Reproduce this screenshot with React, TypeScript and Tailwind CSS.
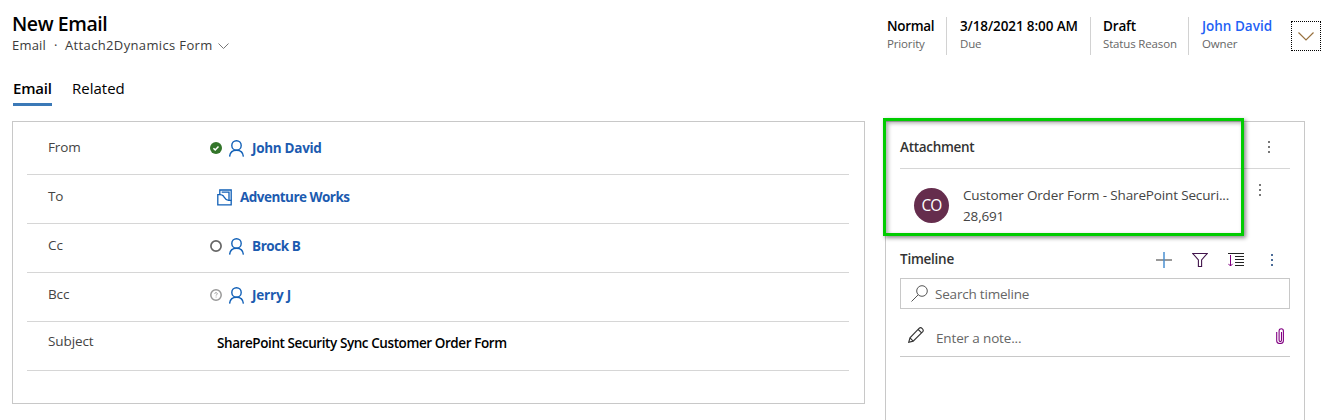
import React from "react";

function Person() {
  return (
    <svg className="h-[17px] w-4 shrink-0" viewBox="0 0 16 17" fill="none" stroke="#1160b7" strokeWidth="1.4">
      <circle cx="7.500" cy="5.400" r="4.700" />
      <path d="M.6 16.600c.3-3.900 3-6.400 6.900-6.400s6.600 2.500 6.900 6.400" />
    </svg>
  );
}

function Account() {
  return (
    <svg className="h-[17px] w-4 shrink-0" viewBox="0 0 16 17" fill="none" stroke="#1160b7" strokeWidth="1.300">
      <path d="M.8 5.700v10.200h13.400V11.400h-2.700C8.500 11 7.600 8.800 6.400 7 5.500 5.800 4.300 5.700 2.800 5.700z" />
      <path d="M2.800 5.700V1h11.400v10.400M4.700 3.200h7.300v8" />
    </svg>
  );
}

function Presence({ kind }: { kind: "ok" | "none" | "unknown" }) {
  if (kind === "ok")
    return (
      <svg className="size-3 shrink-0" viewBox="0 0 12 12">
        <circle cx="6" cy="6" r="6" fill="#33752a" />
        <path d="M3.400 6.200l1.800 1.700 3.300-3.500" fill="none" stroke="#fff" strokeWidth="1.500" />
      </svg>
    );
  if (kind === "none")
    return (
      <svg className="size-3 shrink-0" viewBox="0 0 12 12">
        <circle cx="6" cy="6" r="5.100" fill="none" stroke="#666" strokeWidth="1.700" />
      </svg>
    );
  return (
    <svg className="size-3 shrink-0" viewBox="0 0 12 12" fill="none" stroke="#999">
      <circle cx="6" cy="6" r="5.200" strokeWidth="1.500" />
      <path d="M4.700 4.700c.1-1.500 2.700-1.400 2.600.1 0 .8-1.200.8-1.200 1.800M6.100 7.600v.9" strokeWidth=".9" />
    </svg>
  );
}

function Dots({ color }: { color: string }) {
  return (
    <svg className="h-[14px] w-[2px] shrink-0" viewBox="0 0 2 14" fill={color}>
      <path d="M0 1h2v2H0zM0 6h2v2H0zM0 11h2v2H0z" />
    </svg>
  );
}

function Field({ label, children }: { label: string; children: React.ReactNode }) {
  return (
    <div className="flex h-[49px] items-center border-b border-[#d6d6d6] pb-[4px] pl-[21px]">
      <div className="w-[162px] text-[13.500px] tracking-[-0.100px] text-[#444] first-of-type:pb-px">{label}</div>
      <div className="flex items-center text-[13.500px] font-bold tracking-[-0.420px] text-[#1c5bb0]">{children}</div>
    </div>
  );
}

function Stat({
  value,
  label,
  className,
  valueClass,
}: {
  value: string;
  label: string;
  className: string;
  valueClass: string;
}) {
  return (
    <div className={className}>
      <div className={`h-[18px] text-[13.500px] leading-[18px] font-semibold ${valueClass}`}>{value}</div>
      <div className="h-[19px] text-[11.500px] leading-[18px] tracking-[-0.150px] text-[#666]">{label}</div>
    </div>
  );
}

export default function App() {
  return (
    <div className="flex h-[420px] w-[1321px] flex-col overflow-hidden bg-white font-['Open_Sans',sans-serif] whitespace-nowrap text-black">
      <header className="flex h-[73px] justify-between">
        <div className="pt-[12px] pl-[12px]">
          <h1 className="h-[24px] text-[19.500px] leading-[24px] font-semibold tracking-[-0.420px]">New Email</h1>
          <div className="flex h-[19px] items-center text-[13px] font-medium text-[#3b3b3b]">
            <span className="w-[42px] tracking-[0.200px]">Email</span>
            <span className="w-[11px]">·</span>
            <span className="w-[153px] tracking-[0.360px]">Attach2Dynamics Form</span>
            <svg className="h-[6px] w-[11px]" viewBox="0 0 11 6" fill="none" stroke="#777">
              <path d="M.5.5l5 5 5-5" />
            </svg>
          </div>
        </div>
        <div className="flex pt-[17px]">
          <Stat className="h-[38px] w-[60px] border-r border-[#d2d2d2]" valueClass="tracking-[-0.300px]" value="Normal" label="Priority" />
          <Stat className="h-[38px] w-[144px] border-r border-[#d2d2d2] pl-[13px]" valueClass="tracking-[-0.120px]" value="3/18/2021 8:00 AM" label="Due" />
          <Stat className="h-[38px] w-[98px] border-r border-[#d2d2d2] pl-[12px]" valueClass="tracking-[-0.150px]" value="Draft" label="Status Reason" />
          <Stat className="h-[38px] w-[102px] pl-[13px]" valueClass="text-[#1f62f5]" value="John David" label="Owner" />
          <div className="mt-[4px] flex size-[30px] items-center justify-center border border-dotted border-black">
            <svg className="h-[9px] w-4" viewBox="0 0 16 9" fill="none" stroke="#98713f" strokeWidth="1.200">
              <path d="M.5.5L8 8l7.500-7.500" />
            </svg>
          </div>
        </div>
      </header>

      <nav className="flex h-[48px] gap-[20px] pl-[13px] text-[15px]">
        <div className="h-[33px] w-[39px] border-b-[3px] border-[#3b79b7] leading-[31px] font-semibold tracking-[-0.200px]">Email</div>
        <div className="leading-[31px]">Related</div>
      </nav>

      <main className="flex h-[299px] items-start gap-[20px] pl-[12px]">
        <section className="h-[283px] w-[853px] border border-[#c8c8c8] pt-[4px] pr-[15px] pl-[14px]">
          <Field label="From">
            <Presence kind="ok" />
            <span className="w-[7px]" />
            <Person />
            <span className="pl-[7px] tracking-[-0.300px]">John David</span>
          </Field>
          <Field label="To">
            <span className="w-[7px]" />
            <Account />
            <span className="pl-[7px] tracking-[-0.530px]">Adventure Works</span>
          </Field>
          <Field label="Cc">
            <Presence kind="none" />
            <span className="w-[7px]" />
            <Person />
            <span className="pl-[7px]">Brock B</span>
          </Field>
          <Field label="Bcc">
            <Presence kind="unknown" />
            <span className="w-[7px]" />
            <Person />
            <span className="pl-[7px] tracking-[-0.200px]">Jerry J</span>
          </Field>
          <div className="flex h-[49px] items-start border-b border-[#d6d6d6] pt-[9px] pl-[21px] text-[13.500px] leading-[20px]">
            <div className="w-[169px] tracking-[-0.100px] text-[#444]">Subject</div>
            <div className="pt-[2px] font-semibold tracking-[-0.420px]">SharePoint Security Sync Customer Order Form</div>
          </div>
        </section>

        <section className="relative h-[320px] w-[420px] border border-[#c8c8c8] px-[14px]">
          <div className="flex h-[47px] items-center justify-between border-b border-[#d6d6d6] pt-[4px] pr-[20px]">
            <h2 className="text-[13.500px] font-semibold tracking-[-0.300px] text-[#333]">Attachment</h2>
            <Dots color="#777" />
          </div>
          <div className="flex h-[67px] pl-[14px]">
            <div className="mt-[19px] flex size-[35px] shrink-0 items-center justify-center rounded-full bg-[#652d4d] text-[15.500px] tracking-[-0.800px] text-white">
              CO
            </div>
            <div className="w-[310px] shrink-0 pt-[16px] pl-[14px] text-[13.500px] leading-[21px] tracking-[-0.150px] text-[#444]">
              <div>Customer Order Form - SharePoint Securi...</div>
              <div>28,691</div>
            </div>
            <div className="pt-[14px]">
              <Dots color="#777" />
            </div>
          </div>
          <div className="flex h-[42px] items-center pt-[6px] pr-[17px]">
            <h2 className="flex-1 pb-[2px] text-[13.500px] font-semibold tracking-[-0.250px] text-[#333]">Timeline</h2>
            <div className="flex items-center gap-[20px]">
              <svg className="size-4" viewBox="0 0 16 16">
                <path d="M0 8h16" stroke="#777" strokeWidth="1.500" />
                <path d="M8 0v16" stroke="#4a8fd0" strokeWidth="1.500" />
              </svg>
              <svg className="size-4" viewBox="0 0 16 16" fill="none" stroke="#42154c" strokeWidth="1.100">
                <path d="M.8 1.500h14.400L9.600 8v6.500H6.400V8z" />
              </svg>
              <svg className="size-4" viewBox="0 0 16 16" fill="none" stroke="#222">
                <path d="M0 1.500h16M7 4.500h9M7 7.500h9M7 10.500h9M7 13.500h9" />
                <path d="M2.500 3v11M.3 11.800l2.200 2.200 2.200-2.200" stroke="#820082" />
              </svg>
              <span className="pl-[7px]">
                <Dots color="#4c6c98" />
              </span>
            </div>
          </div>
          <div className="flex h-[31px] items-center border border-[#c8c8c8] pl-[10px] text-[13.500px] text-[#666]">
            <svg className="mr-[7px] size-[17px]" viewBox="0 0 17 17" fill="none" stroke="#555">
              <circle cx="11" cy="6" r="5.300" />
              <path d="M7.200 9.800L.5 16.500" />
            </svg>
            <span className="pt-px tracking-[-0.200px]">Search timeline</span>
          </div>
          <div className="flex h-[48px] items-center border-b border-[#c8c8c8] pr-[6px] pl-[8px] text-[13.500px] text-[#666]">
            <svg className="mt-[5px] mr-[12px] size-4" viewBox="0 0 17 17" fill="none" stroke="#333" strokeWidth="1.200">
              <path d="M.8 16.200l1.300-4.700L12 1.300c1.800-1.700 5.400 1.600 3.700 3.700L5.500 15zM2.100 11.500L5.500 15M10.800 2.500l3.600 3.700" />
            </svg>
            <span className="flex-1 pt-[11px] tracking-[-0.150px]">Enter a note...</span>
            <svg className="mt-[7px] h-4 w-2" viewBox="0 0 8 16" fill="none" stroke="#820082" strokeWidth="1.100">
              <path d="M5.500 4v8.300c0 1.700-2.400 1.700-2.400 0V3c0-3.100 4.300-3.100 4.300 0v9.500c0 4-6.700 4-6.700 0V4" />
            </svg>
          </div>
          <div className="absolute top-[-4px] left-[-3px] h-[118px] w-[361px] border-[3px] border-[#00cc00] shadow-[2px_2px_4px_rgba(0,0,0,0.45),inset_2px_2px_4px_rgba(0,0,0,0.35)]" />
        </section>
      </main>
    </div>
  );
}
